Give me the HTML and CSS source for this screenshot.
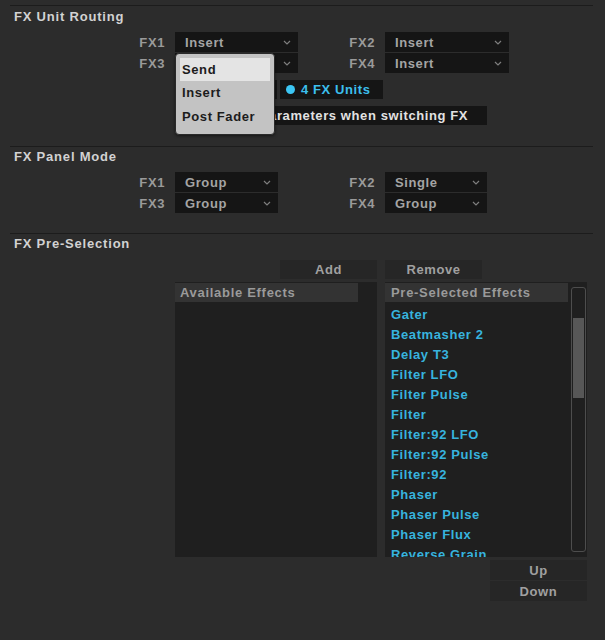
FILE: index.html
```html
<!DOCTYPE html>
<html>
<head>
<meta charset="utf-8">
<link rel="stylesheet" href="styles.css">
</head>
<body>
<div class="panel">
  <section class="sec sec-first">
    <h2 class="title">FX Unit Routing</h2>
    <div class="grid grid-routing">
      <span class="lbl">FX1</span>
      <div class="dd"><span>Insert</span><svg class="chev" width="8" height="5" viewBox="0 0 8 5"><polyline points="1,1 4,4 7,1"/></svg></div>
      <span class="lbl">FX2</span>
      <div class="dd"><span>Insert</span><svg class="chev" width="8" height="5" viewBox="0 0 8 5"><polyline points="1,1 4,4 7,1"/></svg></div>
      <span class="lbl">FX3</span>
      <div class="dd"><span>Insert</span><svg class="chev" width="8" height="5" viewBox="0 0 8 5"><polyline points="1,1 4,4 7,1"/></svg></div>
      <span class="lbl">FX4</span>
      <div class="dd"><span>Insert</span><svg class="chev" width="8" height="5" viewBox="0 0 8 5"><polyline points="1,1 4,4 7,1"/></svg></div>
    </div>
    <div class="units">
      <div class="unit-btn unit-two">2 FX Units</div>
      <div class="unit-btn unit-four"><span class="dot"></span>4 FX Units</div>
    </div>
    <div class="check-row">
      <div class="check"><span class="box"></span>Restore Parameters when switching FX</div>
    </div>
    <div class="menu">
      <div class="menu-item selected">Send</div>
      <div class="menu-item">Insert</div>
      <div class="menu-item">Post Fader</div>
    </div>
  </section>

  <section class="sec">
    <h2 class="title">FX Panel Mode</h2>
    <div class="grid grid-mode">
      <span class="lbl">FX1</span>
      <div class="dd"><span>Group</span><svg class="chev" width="8" height="5" viewBox="0 0 8 5"><polyline points="1,1 4,4 7,1"/></svg></div>
      <span class="lbl">FX2</span>
      <div class="dd"><span>Single</span><svg class="chev" width="8" height="5" viewBox="0 0 8 5"><polyline points="1,1 4,4 7,1"/></svg></div>
      <span class="lbl">FX3</span>
      <div class="dd"><span>Group</span><svg class="chev" width="8" height="5" viewBox="0 0 8 5"><polyline points="1,1 4,4 7,1"/></svg></div>
      <span class="lbl">FX4</span>
      <div class="dd"><span>Group</span><svg class="chev" width="8" height="5" viewBox="0 0 8 5"><polyline points="1,1 4,4 7,1"/></svg></div>
    </div>
  </section>

  <section class="sec sec-last">
    <h2 class="title">FX Pre-Selection</h2>
    <div class="presel">
      <div class="col col-left">
        <div class="btn btn-add">Add</div>
        <div class="list">
          <div class="list-main">
            <div class="list-head">Available Effects</div>
          </div>
          <div class="list-side"></div>
        </div>
      </div>
      <div class="col col-right">
        <div class="btn btn-remove">Remove</div>
        <div class="list">
          <div class="list-main">
            <div class="list-head">Pre-Selected Effects</div>
            <div class="items">
              <div class="item">Gater</div>
              <div class="item">Beatmasher 2</div>
              <div class="item">Delay T3</div>
              <div class="item">Filter LFO</div>
              <div class="item">Filter Pulse</div>
              <div class="item">Filter</div>
              <div class="item">Filter:92 LFO</div>
              <div class="item">Filter:92 Pulse</div>
              <div class="item">Filter:92</div>
              <div class="item">Phaser</div>
              <div class="item">Phaser Pulse</div>
              <div class="item">Phaser Flux</div>
              <div class="item">Reverse Grain</div>
            </div>
          </div>
          <div class="list-side">
            <div class="scroll"><div class="thumb"></div></div>
          </div>
        </div>
        <div class="updown">
          <div class="btn">Up</div>
          <div class="btn">Down</div>
        </div>
      </div>
    </div>
  </section>
</div>
</body>
</html>
```

FILE: styles.css
```css
html, body {
  margin: 0;
  padding: 0;
}
body {
  background: #2c2c2c;
  width: 605px;
  height: 640px;
  overflow: hidden;
  font-family: "Liberation Sans", Arial, sans-serif;
  font-weight: bold;
  font-size: 13px;
  letter-spacing: 0.6px;
  color: #a0a0a0;
}
.panel {
  padding: 5px 12px 0 10px;
}
.sec {
  position: relative;
  border-top: 1px solid #1c1c1c;
  padding-top: 2px;
  padding-bottom: 20px;
}
.sec-first {
  padding-top: 3px;
  padding-bottom: 21px;
}
.sec-last {
  padding-bottom: 0;
}
.title {
  margin: 0;
  padding-left: 4px;
  font-size: 13px;
  line-height: 16px;
  letter-spacing: 0.8px;
  color: #d2d2d2;
  font-weight: bold;
}
.grid {
  display: grid;
  grid-auto-rows: 20px;
  row-gap: 1px;
  margin-top: 7px;
}
.grid-routing {
  grid-template-columns: 165px 123px 87px 124px;
}
.grid-mode {
  grid-template-columns: 165px 103px 107px 102px;
}
.lbl {
  text-align: right;
  padding-right: 10px;
  line-height: 21px;
  color: #9a9a9a;
}
.dd {
  background: #151515;
  display: flex;
  align-items: center;
  justify-content: space-between;
  padding: 0 7px 0 10px;
  color: #a4a4a4;
}
.dd span {
  line-height: 20px;
  padding-top: 1px;
}
.chev {
  display: block;
}
.chev polyline {
  fill: none;
  stroke: #7e7e7e;
  stroke-width: 1.2;
}
.units {
  display: flex;
  gap: 3px;
  margin: 7px 0 0 165px;
}
.unit-btn {
  height: 19px;
  line-height: 19px;
  background: #151515;
  display: flex;
  align-items: center;
}
.unit-two {
  width: 102px;
  padding-left: 10px;
  box-sizing: border-box;
  color: #a4a4a4;
}
.unit-four {
  width: 103px;
  padding-left: 6px;
  box-sizing: border-box;
  color: #3cbfee;
}
.dot {
  width: 9px;
  height: 9px;
  border-radius: 50%;
  background: #3cc6f4;
  margin-right: 6px;
}
.check-row {
  margin: 7px 0 0 165px;
}
.check {
  width: 312px;
  height: 19px;
  line-height: 19px;
  background: #151515;
  display: flex;
  align-items: center;
  color: #e2e2e2;
  padding-left: 8px;
  box-sizing: border-box;
}
.box {
  width: 11px;
  height: 11px;
  border: 1px solid #666;
  box-sizing: border-box;
  margin-right: 9px;
}
.menu {
  position: absolute;
  left: 165px;
  top: 47px;
  width: 100px;
  height: 82px;
  box-sizing: border-box;
  background: #c3c3c3;
  border: 1px solid #2a2a2a;
  border-radius: 4px;
  padding: 4px 4px 0;
  box-shadow: 0 1px 3px rgba(0, 0, 0, 0.5);
}
.menu-item {
  height: 24px;
  line-height: 24px;
  padding-left: 2px;
  color: #1c1c1c;
}
.menu-item.selected {
  height: 23px;
  line-height: 23px;
  background: #e4e4e4;
}
.presel {
  display: grid;
  grid-template-columns: 202px 202px;
  column-gap: 8px;
  margin: 8px 0 0 165px;
}
.col {
  display: flex;
  flex-direction: column;
}
.col-left {
  align-items: flex-end;
}
.col-right {
  align-items: flex-start;
}
.btn {
  width: 97px;
  height: 19px;
  line-height: 20px;
  background: #262626;
  text-align: center;
  color: #a0a0a0;
}
.list {
  align-self: stretch;
  margin-top: 3px;
  height: 275px;
  background: #1f1f1f;
  display: flex;
  overflow: hidden;
}
.list-main {
  flex: 1;
  padding-top: 1px;
  overflow: hidden;
}
.list-side {
  width: 19px;
}
.list-head {
  height: 19px;
  line-height: 20px;
  background: #333333;
  padding-left: 6px;
  color: #9a9a9a;
  letter-spacing: 0.7px;
}
.col-left .list-head {
  padding-left: 5px;
}
.items {
  padding-top: 3px;
}
.item {
  height: 20px;
  line-height: 20px;
  padding-left: 6px;
  color: #37b3de;
}
.scroll {
  margin: 5px 1px 0 3px;
  height: 265px;
  box-sizing: border-box;
  border: 1px solid #4d4d4d;
  border-radius: 3px;
  padding: 30px 1px 0;
}
.thumb {
  height: 80px;
  background: #575757;
}
.updown {
  align-self: flex-end;
  margin-top: 3px;
  display: flex;
  flex-direction: column;
  gap: 1px;
}
.updown .btn {
  height: 20px;
  line-height: 21px;
}
```
